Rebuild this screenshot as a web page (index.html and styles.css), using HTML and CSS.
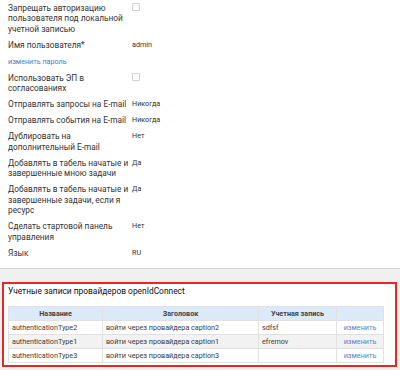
FILE: index.html
```html
<!DOCTYPE html>
<html lang="ru">
<head>
    <meta charset="UTF-8">
    <title>Профиль пользователя</title>
    <link rel="stylesheet" href="styles.css">
</head>
<body>
    <div class="settings">
        <div class="row">
            <div class="label">Запрещать авторизацию пользователя под локальной учетной записью</div>
            <div class="value"><span class="checkbox"></span></div>
        </div>
        <div class="row">
            <div class="label">Имя пользователя*</div>
            <div class="value">admin</div>
        </div>
        <div class="row link-row">
            <a class="link" href="#">изменить пароль</a>
        </div>
        <div class="row">
            <div class="label">Использовать ЭП в согласованиях</div>
            <div class="value"><span class="checkbox"></span></div>
        </div>
        <div class="row">
            <div class="label">Отправлять запросы на E-mail</div>
            <div class="value">Никогда</div>
        </div>
        <div class="row">
            <div class="label">Отправлять события на E-mail</div>
            <div class="value">Никогда</div>
        </div>
        <div class="row">
            <div class="label">Дублировать на дополнительный E-mail</div>
            <div class="value">Нет</div>
        </div>
        <div class="row">
            <div class="label">Добавлять в табель начатые и завершенные мною задачи</div>
            <div class="value">Да</div>
        </div>
        <div class="row">
            <div class="label">Добавлять в табель начатые и завершенные задачи, если я ресурс</div>
            <div class="value">Да</div>
        </div>
        <div class="row">
            <div class="label">Сделать стартовой панель управления</div>
            <div class="value">Нет</div>
        </div>
        <div class="row">
            <div class="label">Язык</div>
            <div class="value">RU</div>
        </div>
    </div>

    <div class="bottom">
        <div class="providers">
            <div class="providers-title">Учетные записи провайдеров openIdConnect</div>
            <table class="providers-table">
                <thead>
                    <tr>
                        <th class="col-name">Название</th>
                        <th class="col-caption">Заголовок</th>
                        <th class="col-account">Учетная запись</th>
                        <th class="col-action"></th>
                    </tr>
                </thead>
                <tbody>
                    <tr>
                        <td>authenticationType2</td>
                        <td>войти через провайдера caption2</td>
                        <td>sdfsf</td>
                        <td class="action"><a href="#">изменить</a></td>
                    </tr>
                    <tr>
                        <td>authenticationType1</td>
                        <td>войти через провайдера caption1</td>
                        <td>efremov</td>
                        <td class="action"><a href="#">изменить</a></td>
                    </tr>
                    <tr>
                        <td>authenticationType3</td>
                        <td>войти через провайдера caption3</td>
                        <td></td>
                        <td class="action"><a href="#">изменить</a></td>
                    </tr>
                </tbody>
            </table>
        </div>
    </div>
</body>
</html>
```

FILE: styles.css
```css
body {
    margin: 0;
    font-family: Roboto, "Liberation Sans", sans-serif;
    color: #333;
    background-color: #fff;
}

.settings {
    padding: 0 0 7px 8px;
    font-size: 8.3px;
}

.row {
    display: grid;
    grid-template-columns: 124px 1fr;
    padding: 2.75px 0;
    line-height: 10.5px;
}

.label {
    font-size: 8.3px;
    color: #333;
}

.value {
    font-size: 7.2px;
    color: #333;
}

.checkbox {
    display: inline-block;
    width: 6px;
    height: 6px;
    border: 1px solid #d0d0d0;
    border-radius: 1px;
    background: #fff;
    vertical-align: -1px;
}

.link-row {
    display: block;
}

.link {
    font-size: 7.2px;
    color: #4a7cc7;
    text-decoration: none;
}

.bottom {
    border-top: 1px solid #d2d2d2;
    background-color: #f0f0f0;
    padding: 13px 3px 4px 2px;
}

.providers {
    background-color: #fff;
    border: 2px solid #e8262a;
    padding: 1px 11px 2px 4px;
}

.providers-title {
    font-size: 8.4px;
    line-height: 13px;
    color: #111;
    margin-bottom: 8px;
}

.providers-table {
    width: 100%;
    border-collapse: collapse;
    table-layout: fixed;
    font-size: 7.2px;
    color: #3a3a3a;
}

.providers-table th,
.providers-table td {
    box-sizing: border-box;
    border: 1px solid #e1e1e1;
    height: 14px;
    padding: 0 3px;
    text-align: left;
    white-space: nowrap;
    overflow: hidden;
}

.providers-table th {
    background-color: #dce9f9;
    color: #444;
    font-weight: bold;
    text-align: center;
}

.providers-table tbody tr:nth-child(2) td {
    background-color: #f2f2f2;
}

.col-name {
    width: 94px;
}

.col-caption {
    width: 156px;
}

.col-account {
    width: 78px;
}

.providers-table td.action {
    text-align: center;
}

.providers-table td.action a {
    color: #5a82c8;
    text-decoration: none;
}
```
